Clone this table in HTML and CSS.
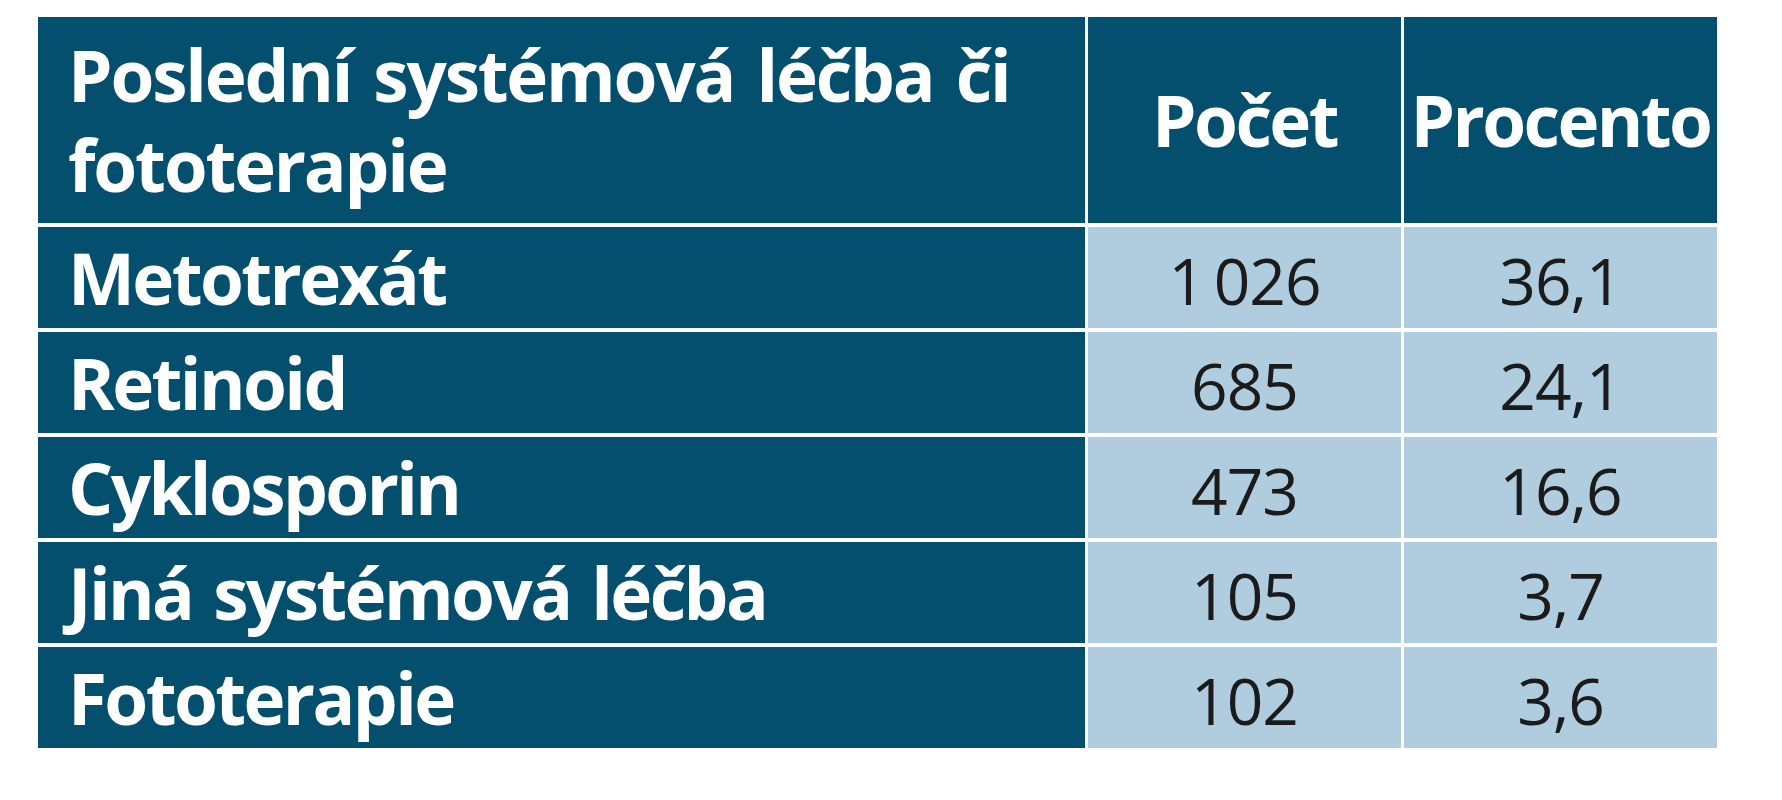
FILE: index.html
```html
<!DOCTYPE html>
<html lang="cs">
<head>
<meta charset="utf-8">
<title>Poslední systémová léčba či fototerapie</title>
<link rel="stylesheet" href="styles.css">
</head>
<body>
<div class="page">
  <div class="table">
    <div class="cell head label">Poslední systémová léčba či fototerapie</div>
    <div class="cell head center">Počet</div>
    <div class="cell head center">Procento</div>

    <div class="cell label">Metotrexát</div>
    <div class="cell num">1&#8201;026</div>
    <div class="cell num">36,1</div>

    <div class="cell label">Retinoid</div>
    <div class="cell num">685</div>
    <div class="cell num">24,1</div>

    <div class="cell label">Cyklosporin</div>
    <div class="cell num">473</div>
    <div class="cell num">16,6</div>

    <div class="cell label">Jiná systémová léčba</div>
    <div class="cell num">105</div>
    <div class="cell num">3,7</div>

    <div class="cell label">Fototerapie</div>
    <div class="cell num">102</div>
    <div class="cell num">3,6</div>
  </div>
</div>
</body>
</html>
```

FILE: styles.css
```css
html, body {
  margin: 0;
  padding: 0;
  background: #ffffff;
}

.page {
  padding: 17px 0 0 38px;
  font-family: "Open Sans", "Noto Sans", sans-serif;
}

.table {
  display: grid;
  grid-template-columns: 1047px 313px 313px;
  grid-template-rows: 206px repeat(5, 101px);
  column-gap: 3px;
  row-gap: 4px;
  width: max-content;
}

.cell {
  box-sizing: border-box;
  background: #034f6d;
  color: #ffffff;
  font-weight: 700;
  font-size: 71px;
  letter-spacing: -2.6px;
  line-height: 101px;
  white-space: nowrap;
}

.label {
  padding-left: 30px;
  word-spacing: 5px;
}

.head {
  display: flex;
  align-items: center;
  line-height: 90px;
  white-space: normal;
}

.head.label {
  padding-right: 20px;
  letter-spacing: -2.2px;
  word-spacing: 6px;
}

.head.center {
  justify-content: center;
}

.num {
  background: #b0cde0;
  color: #1b1b1b;
  font-weight: 400;
  font-size: 64px;
  letter-spacing: -1px;
  word-spacing: 0;
  text-align: center;
  padding-top: 3px;
}
```
